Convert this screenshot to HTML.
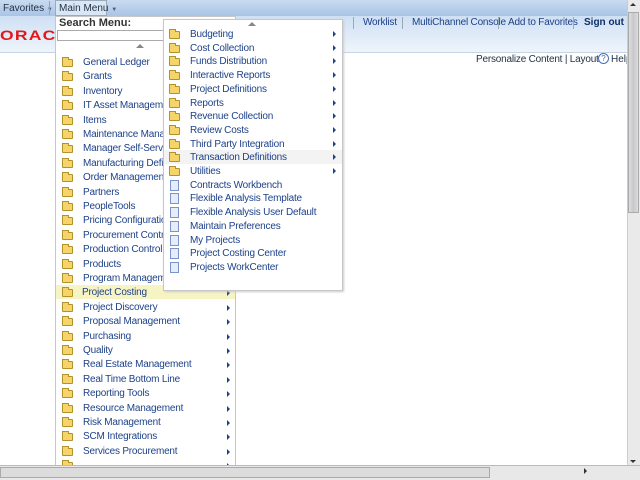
<!DOCTYPE html>
<html><head><style>
*{margin:0;padding:0;box-sizing:border-box}
body{width:640px;height:480px;overflow:hidden;background:#fff;font-family:"Liberation Sans",Arial,sans-serif;font-size:10px;position:relative}
.a{position:absolute}
.lnk{color:#1d4189;white-space:nowrap;font-size:10px;letter-spacing:-0.2px}
.fold{position:absolute;width:11px;height:8px;background:#f5d56a;border:1px solid #b3922b;border-radius:1px}
.fold:before{content:"";position:absolute;left:-1px;top:-3px;width:5px;height:2px;background:#f5d56a;border:1px solid #b3922b;border-bottom:none}
.doc{position:absolute;width:9px;height:11px;background:#e6ecf8;border:1px solid #7b93c8}
.arr{position:absolute;width:0;height:0;border-left:3px solid #1d4189;border-top:3px solid transparent;border-bottom:3px solid transparent}
</style></head><body>
<div class="a" style="left:0;top:0;width:628px;height:16px;background:linear-gradient(#c9dbf0,#a9c4e6)"></div>
<div class="a" style="left:0;top:16px;width:628px;height:36px;background:linear-gradient(#cfe0f4,#eef4fb)"></div>
<div class="a" style="left:0;top:52px;width:628px;height:1px;background:#c6d3e3"></div>
<div class="a" style="left:3px;top:3px;color:#234;font-size:10px">Favorites <span style="font-size:6px;color:#557">▼</span></div>
<div class="a" style="left:49px;top:1px;width:1px;height:14px;background:#8aa"></div>
<div class="a" style="left:55px;top:0;width:52px;height:16px;background:#d9e6f5;border:1px solid #9ab"></div>
<div class="a" style="left:59px;top:3px;color:#234;font-size:10px">Main Menu <span style="font-size:6px;color:#557">▼</span></div>
<div class="a" style="left:0;top:27px;color:#e4181c;font-size:14px;font-weight:bold;letter-spacing:1px;transform:scaleX(1.25);transform-origin:left">ORACLE</div>
<div class="a lnk" style="left:363px;top:17px">Worklist</div>
<div class="a lnk" style="left:412px;top:17px">MultiChannel Console</div>
<div class="a lnk" style="left:508px;top:17px">Add to Favorites</div>
<div class="a" style="left:584px;top:17px;color:#10306a;font-weight:bold;font-size:10px">Sign out</div>
<div class="a" style="left:353px;top:17px;width:1px;height:12px;background:#9ab"></div>
<div class="a" style="left:402px;top:17px;width:1px;height:12px;background:#9ab"></div>
<div class="a" style="left:498px;top:17px;width:1px;height:12px;background:#9ab"></div>
<div class="a" style="left:573px;top:17px;width:1px;height:12px;background:#9ab"></div>
<div class="a" style="left:476px;top:54px;color:#234;font-size:10px;letter-spacing:-0.2px">Personalize Content | Layout</div>
<div class="a" style="left:598px;top:53px;width:11px;height:11px;border:1px solid #4a6fb5;border-radius:50%;font-size:8px;color:#4a6fb5;text-align:center;line-height:9px">?</div>
<div class="a" style="left:611px;top:54px;color:#234;font-size:10px">Help</div>

<div class="a" style="left:55px;top:16px;width:181px;height:452px;background:#fff;border:1px solid #c7c7c7"></div>
<div class="a" style="left:59px;top:17px;font-weight:bold;font-size:11px;color:#333">Search Menu:</div>
<div class="a" style="left:57px;top:30px;width:178px;height:11px;border:1px solid #aaa;background:#fff"></div>
<div class="a" style="left:136px;top:44px;border-left:4px solid transparent;border-right:4px solid transparent;border-bottom:4px solid #888"></div>
<div class="a" style="left:56px;top:285px;width:179px;height:14px;background:#f7f4c4"></div>
<div id="left"></div>

<div class="a" style="left:163px;top:19px;width:180px;height:272px;background:#fff;border:1px solid #c7c7c7;box-shadow:1px 1px 2px #ccc"></div>
<div class="a" style="left:248px;top:22px;border-left:4px solid transparent;border-right:4px solid transparent;border-bottom:4px solid #888"></div>
<div class="a" style="left:164px;top:150px;width:178px;height:14px;background:#f3f3f3"></div>
<div id="sub"></div>

<div class="a" style="left:627px;top:0;width:13px;height:465px;background:#eaeaea;border-left:1px solid #ccc"></div>
<div class="a" style="left:628px;top:12px;width:11px;height:201px;background:linear-gradient(90deg,#ddd,#c8c8cc,#ddd);border:1px solid #aaa"></div>
<div class="a" style="left:630px;top:3px;border-left:3px solid transparent;border-right:3px solid transparent;border-bottom:3px solid #333"></div>
<div class="a" style="left:630px;top:460px;border-left:3px solid transparent;border-right:3px solid transparent;border-top:3px solid #333"></div>
<div class="a" style="left:0;top:465px;width:640px;height:15px;background:#e8e8e8;border-top:1px solid #bbb"></div>
<div class="a" style="left:0;top:467px;width:490px;height:11px;background:#dcdcdc;border:1px solid #aaa"></div>
<div class="a" style="left:584px;top:468px;border-top:3px solid transparent;border-bottom:3px solid transparent;border-left:3px solid #333"></div>
<script>
var L=["General Ledger","Grants","Inventory","IT Asset Management","Items","Maintenance Management","Manager Self-Service","Manufacturing Definitions","Order Management","Partners","PeopleTools","Pricing Configuration","Procurement Contracts","Production Control","Products","Program Management","Project Costing","Project Discovery","Proposal Management","Purchasing","Quality","Real Estate Management","Real Time Bottom Line","Reporting Tools","Resource Management","Risk Management","SCM Integrations","Services Procurement",""];
var h="";
L.forEach(function(t,i){var y=57+i*14.4;
h+='<div class="fold" style="left:62px;top:'+(y+2)+'px"></div>';
if(t)h+='<div class="a lnk" style="left:'+(i==16?82:83)+'px;top:'+(y)+'px">'+t+'</div>';
if(i>=15)h+='<div class="arr" style="left:227px;top:'+(y+3)+'px"></div>';});
document.getElementById("left").innerHTML=h;
var S=["Budgeting","Cost Collection","Funds Distribution","Interactive Reports","Project Definitions","Reports","Revenue Collection","Review Costs","Third Party Integration","Transaction Definitions","Utilities","Contracts Workbench","Flexible Analysis Template","Flexible Analysis User Default","Maintain Preferences","My Projects","Project Costing Center","Projects WorkCenter"];
h="";
S.forEach(function(t,i){var y=29+i*13.7;
if(i<11){h+='<div class="fold" style="left:169px;top:'+(y+2)+'px"></div><div class="arr" style="left:333px;top:'+(y+2)+'px"></div>';}
else h+='<div class="doc" style="left:170px;top:'+(y)+'px"></div>';
h+='<div class="a lnk" style="left:190px;top:'+y+'px">'+t+'</div>';});
document.getElementById("sub").innerHTML=h;
</script>
</body></html>
